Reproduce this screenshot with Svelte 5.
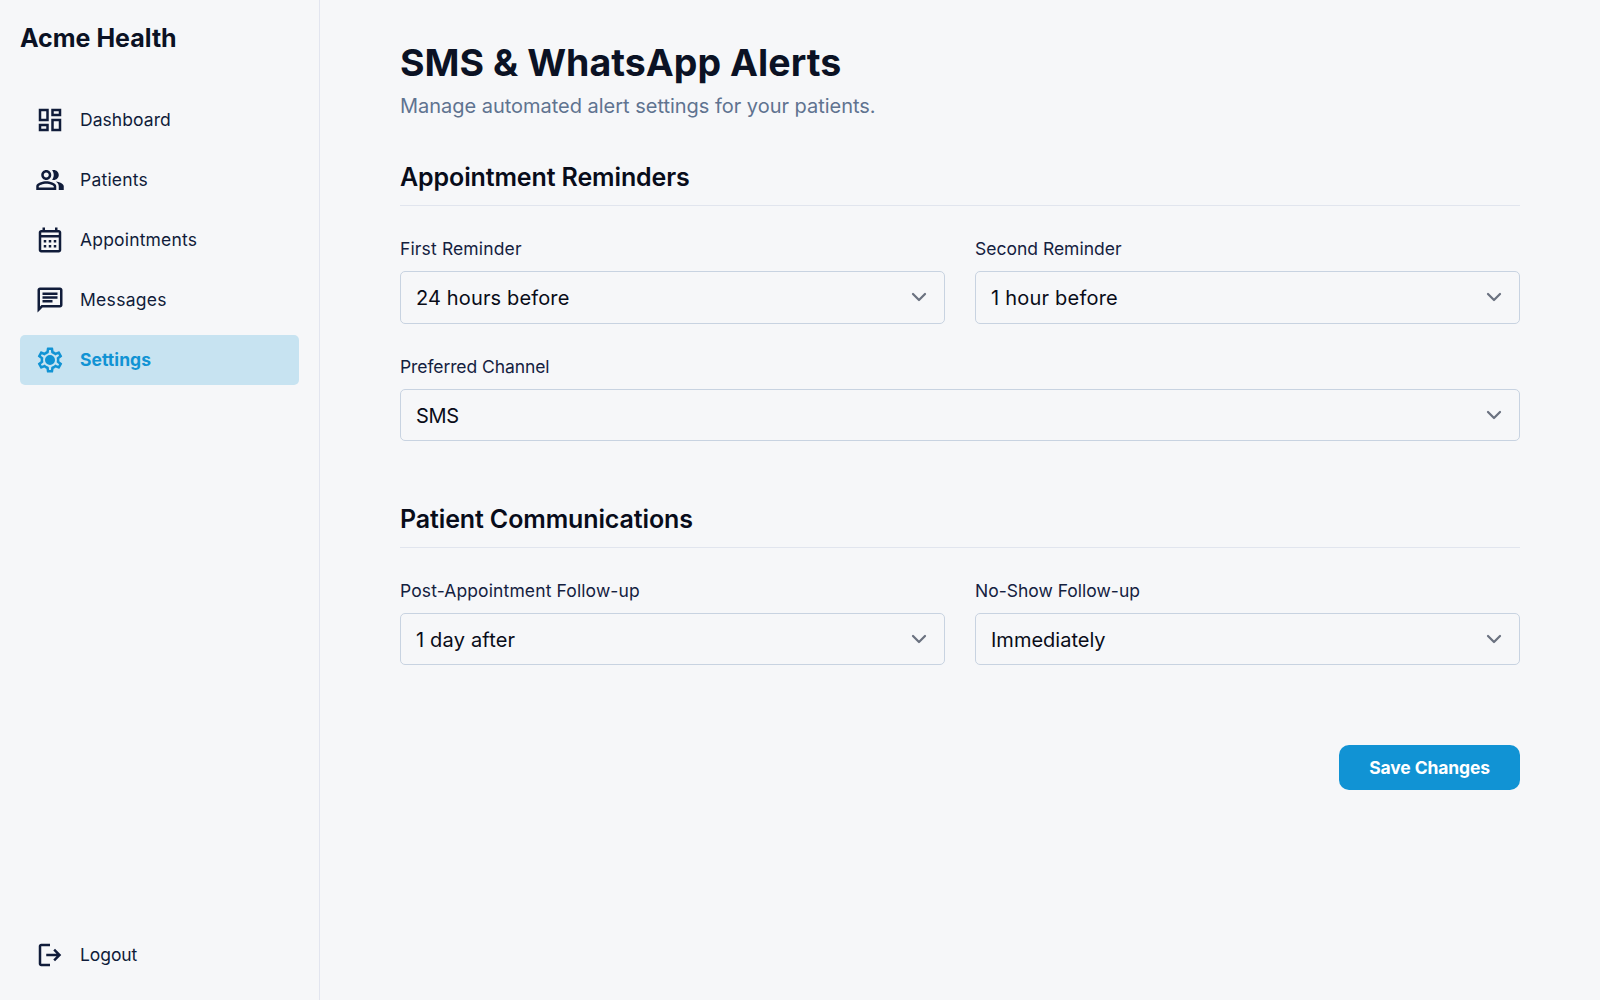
<script>
  const nav = [
    {
      label: 'Dashboard',
      tracking: 0.06,
      path: 'M19 5v2h-4V5h4M9 5v6H5V5h4m10 8v6h-4v-6h4M9 17v2H5v-2h4M21 3h-8v6h8V3zM11 3H3v10h8V3zm10 8h-8v10h8V11zm-10 4H3v6h8v-6z'
    },
    {
      label: 'Patients',
      tracking: 0.22,
      path: 'M16.67 13.13C18.04 14.06 19 15.32 19 17v3h4v-3c0-2.18-3.57-3.47-6.33-3.87zM15 12c2.21 0 4-1.79 4-4s-1.79-4-4-4c-.47 0-.91.1-1.33.24C14.5 5.27 15 6.58 15 8s-.5 2.73-1.33 3.76c.42.14.86.24 1.33.24zM9 12c2.21 0 4-1.79 4-4s-1.79-4-4-4-4 1.79-4 4 1.79 4 4 4zm0-6c1.1 0 2 .9 2 2s-.9 2-2 2-2-.9-2-2 .9-2 2-2zM9 13c-2.67 0-8 1.34-8 4v3h16v-3c0-2.66-5.33-4-8-4zm6 5H3v-.99C3.2 16.29 6.3 15 9 15s5.8 1.29 6 2v1z'
    },
    {
      label: 'Appointments',
      tracking: 0.18,
      path: 'M19 4h-1V2h-2v2H8V2H6v2H5c-1.11 0-1.99.9-1.99 2L3 20c0 1.1.89 2 2 2h14c1.1 0 2-.9 2-2V6c0-1.1-.9-2-2-2zm0 16H5V10h14v10zm0-12H5V6h14v2zM9 14H7v-2h2v2zm4 0h-2v-2h2v2zm4 0h-2v-2h2v2zm-8 4H7v-2h2v2zm4 0h-2v-2h2v2zm4 0h-2v-2h2v2z'
    },
    {
      label: 'Messages',
      tracking: 0.3,
      path: 'M4 4h16v12H5.17L4 17.17V4m0-2c-1.1 0-1.99.9-1.99 2L2 22l4-4h14c1.1 0 2-.9 2-2V4c0-1.1-.9-2-2-2H4zm2 10h8v2H6v-2zm0-3h12v2H6V9zm0-3h12v2H6V6z'
    },
    {
      label: 'Settings',
      tracking: 0.06,
      active: true,
      path: 'M19.43 12.98c.04-.32.07-.64.07-.98 0-.34-.03-.66-.07-.98l2.11-1.65c.19-.15.24-.42.12-.64l-2-3.46c-.09-.16-.26-.25-.44-.25-.06 0-.12.01-.17.03l-2.49 1c-.52-.4-1.08-.73-1.69-.98l-.38-2.65C14.46 2.18 14.25 2 14 2h-4c-.25 0-.46.18-.49.42l-.38 2.65c-.61.25-1.17.59-1.69.98l-2.49-1c-.06-.02-.12-.03-.18-.03-.17 0-.34.09-.43.25l-2 3.46c-.13.22-.07.49.12.64l2.11 1.65c-.04.32-.07.65-.07.98 0 .33.03.66.07.98l-2.11 1.65c-.19.15-.24.42-.12.64l2 3.46c.09.16.26.25.44.25.06 0 .12-.01.17-.03l2.49-1c.52.4 1.08.73 1.69.98l.38 2.65c.03.24.24.42.49.42h4c.25 0 .46-.18.49-.42l.38-2.65c.61-.25 1.17-.59 1.69-.98l2.49 1c.06.02.12.03.18.03.17 0 .34-.09.43-.25l2-3.46c.12-.22.07-.49-.12-.64l-2.11-1.65zm-1.98-1.71c.04.31.05.52.05.73 0 .21-.02.43-.05.73l-.14 1.13.89.7 1.08.84-.7 1.21-1.27-.51-1.04-.42-.9.68c-.43.32-.84.56-1.25.73l-1.06.43-.16 1.13-.2 1.35h-1.4l-.19-1.35-.16-1.13-1.06-.43c-.43-.18-.83-.41-1.23-.71l-.91-.7-1.06.43-1.27.51-.7-1.21 1.08-.84.89-.7-.14-1.13c-.03-.31-.05-.54-.05-.74s.02-.43.05-.73l.14-1.13-.89-.7-1.08-.84.7-1.21 1.27.51 1.04.42.9-.68c.43-.32.84-.56 1.25-.73l1.06-.43.16-1.13.2-1.35h1.39l.19 1.35.16 1.13 1.06.43c.43.18.83.41 1.23.71l.91.7 1.06-.43 1.27-.51.7 1.21-1.07.85-.89.7.14 1.13zM12 8a4 4 0 1 0 0 8 4 4 0 0 0 0-8z'
    }
  ];
  const logout = {
    label: 'Logout',
    tracking: -0.08,
    path: 'M5 21q-.825 0-1.413-.587T3 19V5q0-.825.587-1.413T5 3h7v2H5v14h7v2zm11-4l-1.375-1.45 2.55-2.55H9v-2h8.175l-2.55-2.55L16 7l5 5z'
  };

  const sections = [
    {
      title: 'Appointment Reminders',
      fields: [
        { label: 'First Reminder', labelTracking: 0.14, value: '24 hours before', tracking: 0.14 },
        { label: 'Second Reminder', labelTracking: 0, value: '1 hour before', tracking: 0.22 },
        { label: 'Preferred Channel', labelTracking: -0.09, value: 'SMS', tracking: -0.3, wide: true }
      ]
    },
    {
      title: 'Patient Communications',
      fields: [
        { label: 'Post-Appointment Follow-up', labelTracking: 0.12, value: '1 day after', tracking: 0.18 },
        { label: 'No-Show Follow-up', labelTracking: 0, value: 'Immediately', tracking: 0 }
      ]
    }
  ];
</script>

{#snippet entry(item)}
  <a class="item" class:active={item.active} href="#top">
    <svg class="icon" viewBox="0 0 24 24" fill="currentColor" aria-hidden="true"><path d={item.path} /></svg>
    <span style:letter-spacing="{item.tracking}px">{item.label}</span>
  </a>
{/snippet}

<div class="app">
  <aside class="sidebar">
    <div class="brand">Acme Health</div>
    <nav class="nav">
      {#each nav as item}
        {@render entry(item)}
      {/each}
    </nav>
    <div class="footer">
      {@render entry(logout)}
    </div>
  </aside>

  <main class="main">
    <h1>SMS &amp; WhatsApp Alerts</h1>
    <p class="lead">Manage automated alert settings for your patients.</p>

    {#each sections as section}
      <section>
        <h2>{section.title}</h2>
        <div class="grid">
          {#each section.fields as field}
            <div class="field" class:wide={field.wide}>
              <div class="label" style:letter-spacing="{field.labelTracking}px">{field.label}</div>
              <div class="select">
                <span style:letter-spacing="{field.tracking}px">{field.value}</span>
                <svg class="chevron" viewBox="0 0 20 20" fill="none" aria-hidden="true">
                  <path d="M6 8l4 4 4-4" stroke="#6b7280" stroke-width="1.5" stroke-linecap="round" stroke-linejoin="round" />
                </svg>
              </div>
            </div>
          {/each}
        </div>
      </section>
    {/each}

    <div class="actions">
      <button class="save">Save Changes</button>
    </div>
  </main>
</div>

<style>
  :global(body) {
    background: #f6f7f9;
  }
  .app {
    display: flex;
    height: 1000px;
    box-sizing: border-box;
    background: #f6f7f9;
    font-family: Inter, sans-serif;
    color: #0b1224;
  }
  .sidebar {
    display: flex;
    flex-direction: column;
    width: 320px;
    flex: none;
    box-sizing: border-box;
    padding: 20px;
    border-right: 1px solid #e2e5ef;
  }
  .brand {
    padding-top: 1px;
    font-size: 25px;
    line-height: 35px;
    font-weight: 700;
  }
  .nav {
    display: flex;
    flex-direction: column;
    gap: 10px;
    margin-top: 39px;
  }
  .item {
    display: flex;
    align-items: center;
    gap: 15px;
    height: 50px;
    padding: 0 15px;
    border-radius: 5px;
    font-size: 17.5px;
    line-height: 25px;
    color: #101c3a;
    text-decoration: none;
  }
  .item span {
    padding-bottom: 2px;
  }
  .item.active {
    background: #c7e3f1;
    color: #1193d4;
    font-weight: 700;
  }
  .footer {
    margin-top: auto;
  }
  .icon {
    width: 30px;
    height: 30px;
    flex: none;
  }
  .main {
    flex: 1;
    box-sizing: border-box;
    padding: 40px 80px;
  }
  h1 {
    margin: 0;
    font-size: 37.5px;
    line-height: 45px;
    font-weight: 700;
    letter-spacing: 0.03px;
  }
  .lead {
    margin: 6px 0 0;
    font-size: 20px;
    line-height: 30px;
    letter-spacing: -0.02px;
    color: #5f7390;
  }
  section {
    margin-top: 39px;
  }
  section + section {
    margin-top: 60.5px;
  }
  h2 {
    margin: 0 0 30px;
    padding-bottom: 10px;
    border-bottom: 1px solid #e1e5ee;
    font-size: 25px;
    line-height: 35px;
    font-weight: 600;
    letter-spacing: -0.12px;
    color: #080c1a;
  }
  .grid {
    display: grid;
    grid-template-columns: 1fr 1fr;
    gap: 30px;
  }
  .wide {
    grid-column: 1 / -1;
  }
  .label {
    margin-bottom: 10px;
    font-size: 17.5px;
    line-height: 25px;
    color: #14213f;
  }
  .select {
    display: flex;
    align-items: center;
    justify-content: space-between;
    height: 52.5px;
    box-sizing: border-box;
    padding: 0 10px 0 15px;
    border: 1px solid #c8d3e1;
    border-radius: 5px;
    font-size: 20px;
    line-height: 30px;
    color: #090c18;
  }
  .select span {
    padding-top: 2px;
  }
  .chevron {
    width: 30px;
    height: 30px;
  }
  .actions {
    display: flex;
    justify-content: flex-end;
    margin-top: 80px;
  }
  .save {
    height: 45px;
    padding: 0 30px;
    border: 0;
    border-radius: 10px;
    background: #1193d4;
    color: #fff;
    font-family: inherit;
    font-size: 17.5px;
    line-height: 25px;
    font-weight: 700;
    letter-spacing: -0.12px;
  }
</style>
